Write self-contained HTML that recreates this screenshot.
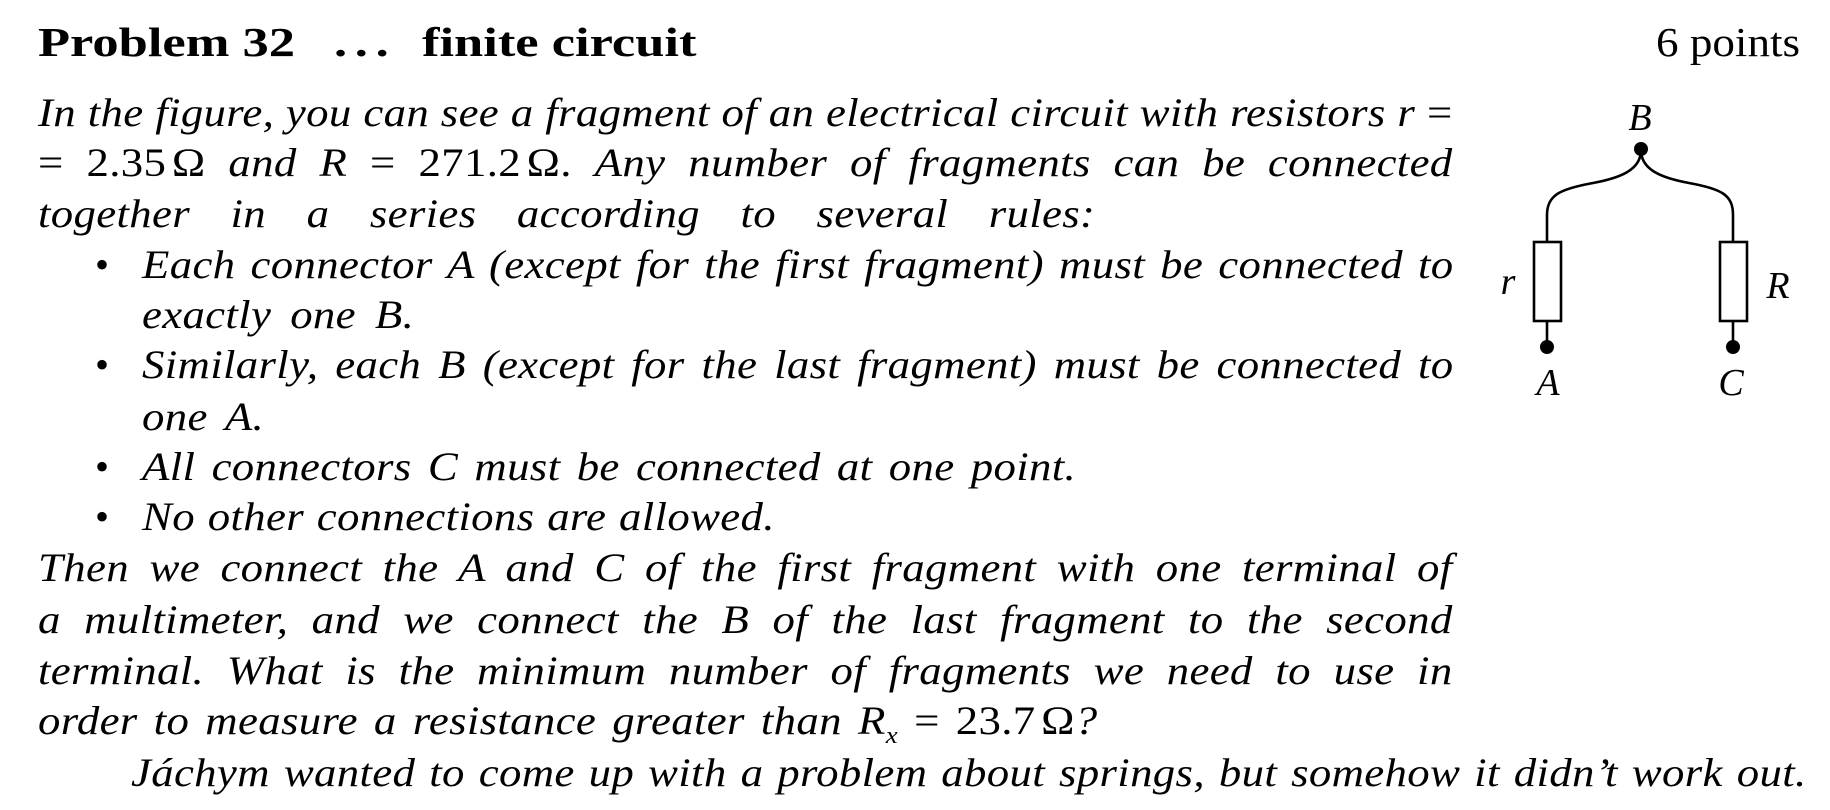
<!DOCTYPE html>
<html><head><meta charset="utf-8"><style>
html,body{margin:0;padding:0;background:#fff;width:1830px;height:810px;overflow:hidden}
body{position:relative;font-family:"Liberation Serif",serif;color:#000}
.l{position:absolute;left:38px;font-size:40px;letter-spacing:0.3px;font-style:italic;line-height:50px;height:50px;white-space:nowrap;text-align:justify;text-align-last:justify;transform-origin:0 50%;transform:scaleX(1.12)}
.u{font-style:normal}
.o{font-style:normal;margin-left:5px}
.b{position:absolute;left:95px;font-size:40px;line-height:50px}
.t{position:absolute;top:17px;font-size:41px;font-weight:bold;line-height:50px;white-space:nowrap;transform-origin:0 50%;transform:scaleX(1.28)}
.lbl{position:absolute;font-style:italic;font-size:38px;transform:translate(-50%,-50%);line-height:1}
</style></head><body>
<div class="t" style="left:38px">Problem 32</div>
<div class="t" style="left:334px;letter-spacing:6px">...</div>
<div class="t" style="left:422px">finite circuit</div>
<div class="t" style="left:1656px;font-weight:normal;transform:scaleX(1.1)">6 points</div>

<div class="l" style="top:88px;width:1263px">In the figure, you can see a fragment of an electrical circuit with resistors r <span class="u">=</span></div>
<div class="l" style="top:138px;width:1263px"><span class="u">= 2.35<span class="o">Ω</span></span> and R <span class="u">= 271.2<span class="o">Ω</span>.</span> Any number of fragments can be connected</div>
<div class="l" style="top:189px;width:944px">together in a series according to several rules:</div>

<div class="b" style="top:240px">•</div>
<div class="l" style="top:240px;left:142px;width:1171px">Each connector A (except for the first fragment) must be connected to</div>
<div class="l" style="top:290px;left:142px;width:243px">exactly one B.</div>
<div class="b" style="top:340px">•</div>
<div class="l" style="top:340px;left:142px;width:1171px">Similarly, each B (except for the last fragment) must be connected to</div>
<div class="l" style="top:392px;left:142px;width:109px">one A.</div>
<div class="b" style="top:442px">•</div>
<div class="l" style="top:442px;left:142px;width:834px">All connectors C must be connected at one point.</div>
<div class="b" style="top:492px">•</div>
<div class="l" style="top:492px;left:142px;width:565px">No other connections are allowed.</div>

<div class="l" style="top:543px;width:1263px">Then we connect the A and C of the first fragment with one terminal of</div>
<div class="l" style="top:595px;width:1263px">a multimeter, and we connect the B of the last fragment to the second</div>
<div class="l" style="top:646px;width:1263px">terminal. What is the minimum number of fragments we need to use in</div>
<div class="l" style="top:696px;width:946px">order to measure a resistance greater than R<sub style="font-size:24px">x</sub> <span class="u">= 23.7<span class="o">Ω</span></span>?</div>
<div class="l" style="top:748px;left:131px;width:1496px">Jáchym wanted to come up with a problem about springs, but somehow it didn’t work out.</div>

<svg style="position:absolute;left:0;top:0" width="1830" height="810">
<g fill="none" stroke="#000" stroke-width="2.6">
<path d="M1641,150 C1641,170 1620,178 1593,183 C1560,189 1547,195 1547,215 V242"/>
<path d="M1641,150 C1641,170 1662,178 1689,183 C1722,189 1733,195 1733,215 V242"/>
<rect x="1534" y="242" width="27" height="79"/>
<rect x="1720" y="242" width="27" height="79"/>
<path d="M1547,321 V347 M1733,321 V347"/>
</g>
<g fill="#000"><circle cx="1641" cy="149" r="7"/><circle cx="1547" cy="347" r="7"/><circle cx="1733" cy="347" r="7"/></g>
</svg>
<div class="lbl" style="left:1640px;top:118px">B</div>
<div class="lbl" style="left:1508px;top:282px">r</div>
<div class="lbl" style="left:1778px;top:286px">R</div>
<div class="lbl" style="left:1548px;top:383px">A</div>
<div class="lbl" style="left:1731px;top:383px">C</div>
</body></html>
